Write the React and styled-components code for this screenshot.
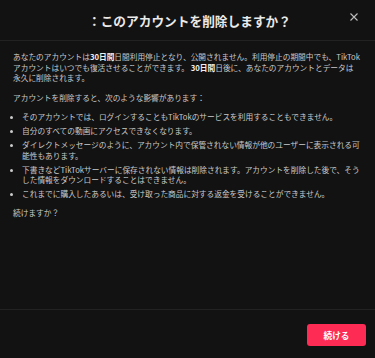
import React from 'react';
import styled, { createGlobalStyle } from 'styled-components';

const GlobalStyle = createGlobalStyle`
  html, body {
    margin: 0;
    padding: 0;
    background: #121212;
  }
  body {
    font-family: "Noto Sans CJK JP", "Noto Sans", sans-serif;
  }
`

const Modal = styled.div`
  width: 375px;
  height: 358px;
  display: flex;
  flex-direction: column;
  background: #121212;
  color: rgba(255, 255, 255, 0.78);
`

const Header = styled.div`
  height: 40px;
  display: flex;
  align-items: center;
  border-bottom: 1px solid #222;
  padding: 0 14px 0 32px;
`

const Title = styled.h1`
  flex: 1;
  margin: 0;
  text-align: center;
  font-size: 12.7px;
  font-weight: 700;
  color: #eaeaea;
  letter-spacing: 0;
`

const Close = styled.button`
  width: 14px;
  height: 14px;
  padding: 0;
  border: none;
  background: none;
  display: flex;
  align-items: center;
  justify-content: center;
  color: #bdbdbd;
  margin-top: -6px;
`

const Body = styled.div`
  flex: 1;
  padding: 11px 13px 0 13px;
  font-size: 7.7px;
  line-height: 10.5px;
`

const Para = styled.p`
  margin: 0 0 9px 0;
`

const Strong = styled.b`
  font-weight: 700;
  color: #f0f0f0;
`

const Keep = styled.span`
  white-space: nowrap;
`

const List = styled.ul`
  margin: 0 0 8px 0;
  padding-left: 9px;
`

const Item = styled.li`
  margin-bottom: 3.5px;
  &::marker {
    font-size: 7px;
  }
`

const Footer = styled.div`
  border-top: 1px solid #222;
  display: flex;
  justify-content: flex-end;
  padding: 14px 9px 12px 0;
`

const Button = styled.button`
  width: 59px;
  height: 22px;
  border: none;
  border-radius: 3px;
  background: #fe2c55;
  color: #fff;
  font-family: "Noto Sans CJK JP", "Noto Sans", sans-serif;
  font-size: 8.6px;
  font-weight: 700;
  padding: 0;
`

export default function App() {
  return (
    <>
      <GlobalStyle />
      <Modal>
        <Header>
          <Title>：このアカウントを削除しますか？</Title>
          <Close aria-label="close">
            <svg width="8" height="8" viewBox="0 0 8 8">
              <path d="M0.5 0.5 L7.5 7.5 M7.5 0.5 L0.5 7.5" stroke="currentColor" strokeWidth="1.1" />
            </svg>
          </Close>
        </Header>
        <Body>
          <Para>
            あなたのアカウントは<Strong>30日間</Strong>日間利用停止となり、公開されません。利用停止の期間中でも、TikTokアカウントはいつでも復活させることができます。 <Strong>30日間</Strong>日後に、あなたのアカウントとデータは<Keep>永久に</Keep>削除されます。
          </Para>
          <Para>アカウントを削除すると、次のような影響があります：</Para>
          <List>
            <Item>そのアカウントでは、ログインすることもTikTokのサービスを利用することもできません。</Item>
            <Item>自分のすべての動画にアクセスできなくなります。</Item>
            <Item>ダイレクトメッセージのように、アカウント内で保管されない情報が他のユーザーに表示される可能性もあります。</Item>
            <Item>下書きなどTikTokサーバーに保存されない情報は削除されます。アカウントを削除した後で、そうした情報をダウンロードすることはできません。</Item>
            <Item>これまでに購入したあるいは、受け取った商品に対する返金を受けることができません。</Item>
          </List>
          <Para>続けますか？</Para>
        </Body>
        <Footer>
          <Button>続ける</Button>
        </Footer>
      </Modal>
    </>
  );
}
